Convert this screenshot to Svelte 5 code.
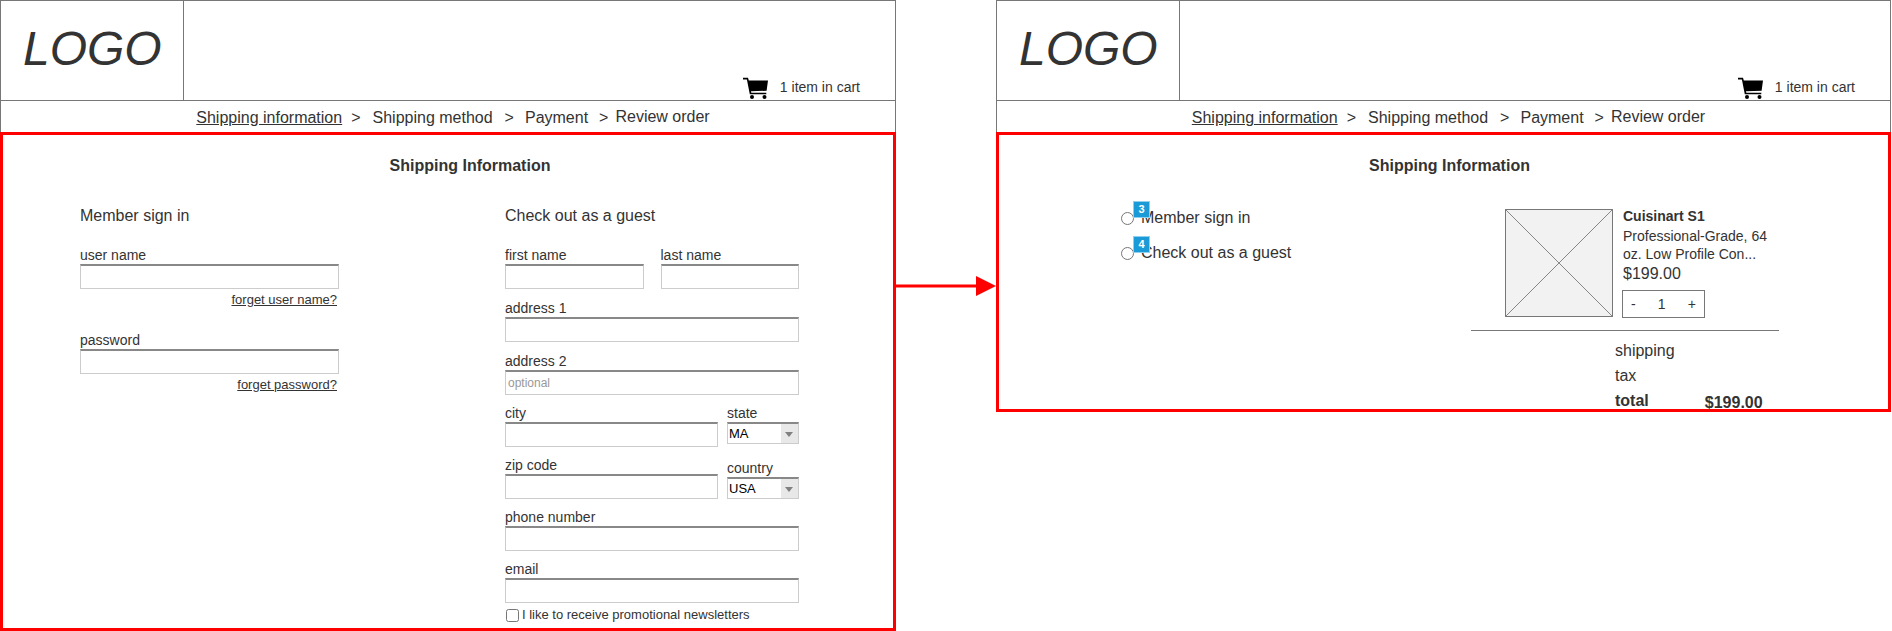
<script>
	const stateValue = 'MA';
	const countryValue = 'USA';
</script>

{#snippet chrome()}
	<header class="top">
		<div class="logo">LOGO</div>
		<div class="cart">
			<svg width="25" height="22" viewBox="0 0 25 22" aria-hidden="true">
				<path d="M0 0.8h5l0.8 2.7H25l-1.4 10.2-15.6 0.6 0.3 1.4h15v1.6H6.8L3.9 2.4H0z" fill="#000" />
				<circle cx="9" cy="20" r="2" fill="#000" />
				<circle cx="21.5" cy="20" r="2" fill="#000" />
			</svg>
			<span>1 item in cart</span>
		</div>
	</header>
	<nav class="steps">
		<a href="#shipping">Shipping information</a>
		<span class="sep-1">&gt;</span>
		<span class="method">Shipping method</span>
		<span class="sep-2">&gt;</span>
		<span>Payment</span>
		<span>&gt;</span>
		<span class="last">Review order</span>
	</nav>
{/snippet}

{#snippet field(label, placeholder = '')}
	<div class="field">
		<label>{label}<input type="text" {placeholder} /></label>
	</div>
{/snippet}

{#snippet pick(label, value)}
	<div class="field pick">
		<label>{label}
			<span class="select">
				<select><option>{value}</option></select>
				<i></i>
			</span>
		</label>
	</div>
{/snippet}

<div class="page">
	<section class="panel">
		{@render chrome()}
		<main class="box box-form">
			<h2>Shipping Information</h2>
			<div class="columns">
				<div class="member">
					<h3>Member sign in</h3>
					{@render field('user name')}
					<a class="forget" href="#user">forget user name?</a>
					<div class="spacer"></div>
					{@render field('password')}
					<a class="forget" href="#password">forget password?</a>
				</div>
				<div class="guest">
					<h3>Check out as a guest</h3>
					<div class="row wide">
						{@render field('first name')}
						{@render field('last name')}
					</div>
					<div class="tall">{@render field('address 1')}</div>
					{@render field('address 2', 'optional')}
					<div class="row split">
						{@render field('city')}
						{@render pick('state', stateValue)}
					</div>
					<div class="row split country">
						{@render field('zip code')}
						{@render pick('country', countryValue)}
					</div>
					{@render field('phone number')}
					{@render field('email')}
					<label class="news"><input type="checkbox" /> I like to receive promotional newsletters</label>
				</div>
			</div>
		</main>
	</section>

	<div class="arrow">
		<svg width="100" height="20" viewBox="0 0 100 20" aria-hidden="true">
			<path d="M0 8.5h82v3H0z" fill="#f00" />
			<path d="M80 0l20 10-20 10z" fill="#f00" />
		</svg>
	</div>

	<section class="panel">
		{@render chrome()}
		<main class="box box-review">
			<h2>Shipping Information</h2>
			<div class="review">
				<div class="choices">
					<label class="choice">
						<input type="radio" name="how" />
						<span class="badge">3</span>
						Member sign in
					</label>
					<label class="choice">
						<input type="radio" name="how" />
						<span class="badge">4</span>
						Check out as a guest
					</label>
				</div>
				<div class="summary">
					<div class="item">
						<svg class="thumb" width="108" height="108" viewBox="0 0 108 108" aria-hidden="true">
							<rect x="0.5" y="0.5" width="107" height="107" fill="#f2f2f2" stroke="#777" />
							<path d="M0.5 0.5L107.5 107.5M107.5 0.5L0.5 107.5" stroke="#888" fill="none" />
						</svg>
						<div class="info">
							<strong>Cuisinart S1</strong>
							<p>Professional-Grade, 64<br />oz. Low Profile Con...</p>
							<div class="price">$199.00</div>
							<div class="qty"><span>-</span><span>1</span><span>+</span></div>
						</div>
					</div>
					<div class="totals">
						<div>shipping</div>
						<div>tax</div>
						<div class="total"><b>total</b><b class="amount">$199.00</b></div>
					</div>
				</div>
			</div>
		</main>
	</section>
</div>

<style>
	:global(body) {
		margin: 0;
		background: #fff;
	}

	.page {
		display: flex;
		align-items: flex-start;
		width: 1892px;
		height: 631px;
		overflow: hidden;
		font-family: 'Liberation Sans', Arial, sans-serif;
		color: #333;
	}

	.panel {
		flex: none;
		width: 896px;
		box-sizing: border-box;
		border-top: 1px solid #777;
		border-left: 1px solid #777;
		border-right: 1px solid #777;
	}

	.panel:last-child {
		width: 895px;
	}

	.arrow {
		flex: none;
		width: 100px;
		margin-top: 276px;
		display: flex;
	}

	.top {
		display: flex;
		height: 100px;
		box-sizing: border-box;
		border-bottom: 1px solid #777;
	}

	.logo {
		width: 183px;
		box-sizing: border-box;
		border-right: 1px solid #777;
		padding: 19px 0 0 22px;
		font-size: 48px;
		line-height: 58px;
		font-style: italic;
	}

	.cart {
		flex: 1;
		display: flex;
		justify-content: flex-end;
		align-items: flex-end;
		gap: 12px;
		padding: 0 35px 1px 0;
		font-size: 14px;
		line-height: 22px;
	}

	.cart span {
		padding-bottom: 1px;
	}

	.steps {
		display: flex;
		justify-content: center;
		align-items: center;
		gap: 11px;
		height: 31px;
		padding: 3px 0 0 10px;
		box-sizing: border-box;
		font-size: 16px;
	}

	.steps a {
		color: inherit;
		text-decoration: underline;
	}

	.steps .sep-1 {
		margin-left: -2px;
	}

	.steps .method {
		margin-left: 1px;
	}

	.steps .sep-2 {
		margin-left: 1px;
	}

	.steps .last {
		margin: 0 0 3px -4px;
	}

	.box {
		box-sizing: border-box;
		margin: 0 -1px;
		border: 3px solid #f00;
	}

	.box-form {
		height: 499px;
	}

	.box-review {
		height: 280px;
	}

	h2 {
		margin: 0;
		padding-top: 21px;
		font-size: 16px;
		line-height: 20px;
		text-align: center;
		font-weight: 700;
		position: relative;
		left: 22px;
	}

	.box-review h2 {
		left: 6px;
	}

	.columns {
		display: flex;
		padding: 30px 0 0 77px;
		font-size: 14px;
	}

	h3 {
		margin: 0;
		font-size: 16px;
		font-weight: 400;
		line-height: 20px;
		padding-bottom: 21px;
	}

	.member {
		width: 425px;
		box-sizing: border-box;
		padding-right: 166px;
	}

	.guest {
		width: 294px;
	}

	.field label {
		display: block;
		line-height: 16px;
		color: #333;
	}

	.field input {
		display: block;
		width: 100%;
		height: 25px;
		box-sizing: border-box;
		margin: 1px 0 0;
		padding: 0 2px;
		border: 1px solid #ccc;
		border-top: 2px solid #888;
		background: #fff;
		font: 12px 'Liberation Sans', Arial, sans-serif;
	}

	.field input::placeholder {
		color: #999;
	}

	.guest > .field,
	.guest > .row {
		margin-bottom: 10px;
	}

	.guest > .tall,
	.guest > .row.wide {
		margin-bottom: 11px;
	}

	.row {
		display: flex;
	}

	.row.wide {
		gap: 17px;
	}

	.row.wide .field {
		width: 139px;
	}

	.split {
		gap: 9px;
	}

	.split > .field:first-child {
		width: 213px;
	}

	.pick {
		width: 72px;
	}

	.country .pick {
		margin-top: 3px;
	}

	.select {
		display: block;
		position: relative;
		height: 22px;
		margin-top: 1px;
	}

	.select select {
		display: block;
		width: 100%;
		height: 22px;
		box-sizing: border-box;
		margin: 0;
		padding: 0 1px;
		appearance: none;
		border: 1px solid #ccc;
		border-top: 2px solid #888;
		border-radius: 0;
		background: #fff;
		color: #000;
		font: 13px 'Liberation Sans', Arial, sans-serif;
	}

	.select i {
		position: absolute;
		top: 2px;
		right: 1px;
		bottom: 1px;
		width: 17px;
		background: #e8e8e8;
	}

	.select i::after {
		content: '';
		position: absolute;
		top: 8px;
		left: 4px;
		border-left: 4px solid transparent;
		border-right: 4px solid transparent;
		border-top: 5px solid #808080;
	}

	.forget {
		display: block;
		margin-top: 3px;
		padding-right: 2px;
		text-align: right;
		font-size: 13px;
		line-height: 16px;
		color: #333;
	}

	.spacer {
		height: 24px;
	}

	.news {
		display: flex;
		align-items: center;
		gap: 3px;
		margin-top: -6px;
		font-size: 13px;
		line-height: 16px;
	}

	.news input {
		width: 13px;
		height: 13px;
		margin: 0 0 0 1px;
	}

	.review {
		display: flex;
		padding-top: 33px;
	}

	.choices {
		width: 472px;
		box-sizing: border-box;
		margin-top: -1px;
		padding-left: 122px;
		font-size: 16px;
	}

	.choice {
		display: flex;
		align-items: center;
		height: 20px;
		margin-bottom: 15px;
		position: relative;
		white-space: nowrap;
	}

	.choice input {
		width: 13px;
		height: 13px;
		margin: 1px 7px 0 0;
	}

	.badge {
		position: absolute;
		left: 12px;
		top: -7px;
		width: 17px;
		height: 17px;
		box-sizing: border-box;
		border: 1px solid #8fd0ee;
		background: #1a9ad6;
		color: #fff;
		font-size: 11px;
		font-weight: 700;
		line-height: 14px;
		text-align: center;
	}

	.summary {
		width: 308px;
	}

	.item {
		display: flex;
		gap: 10px;
		padding-left: 34px;
	}

	.thumb {
		flex: none;
		display: block;
	}

	.info {
		margin-top: -1px;
		font-size: 14px;
	}

	.info strong {
		display: block;
		font-size: 14px;
		line-height: 16px;
	}

	.info p {
		margin: 3px 0 0;
		line-height: 18px;
	}

	.price {
		font-size: 16px;
		line-height: 20px;
		margin-top: 1px;
	}

	.qty {
		display: flex;
		justify-content: space-between;
		box-sizing: border-box;
		width: 83px;
		height: 28px;
		margin: 6px 0 0 -1px;
		padding: 0 8px 0 8px;
		border: 1px solid #777;
		font-size: 14px;
		line-height: 26px;
	}

	.totals {
		margin-top: 12px;
		padding: 7px 0 0 144px;
		border-top: 1px solid #777;
		font-size: 16px;
		line-height: 25px;
	}

	.total {
		display: flex;
		gap: 56px;
	}

	.amount {
		position: relative;
		top: 2px;
	}
</style>
